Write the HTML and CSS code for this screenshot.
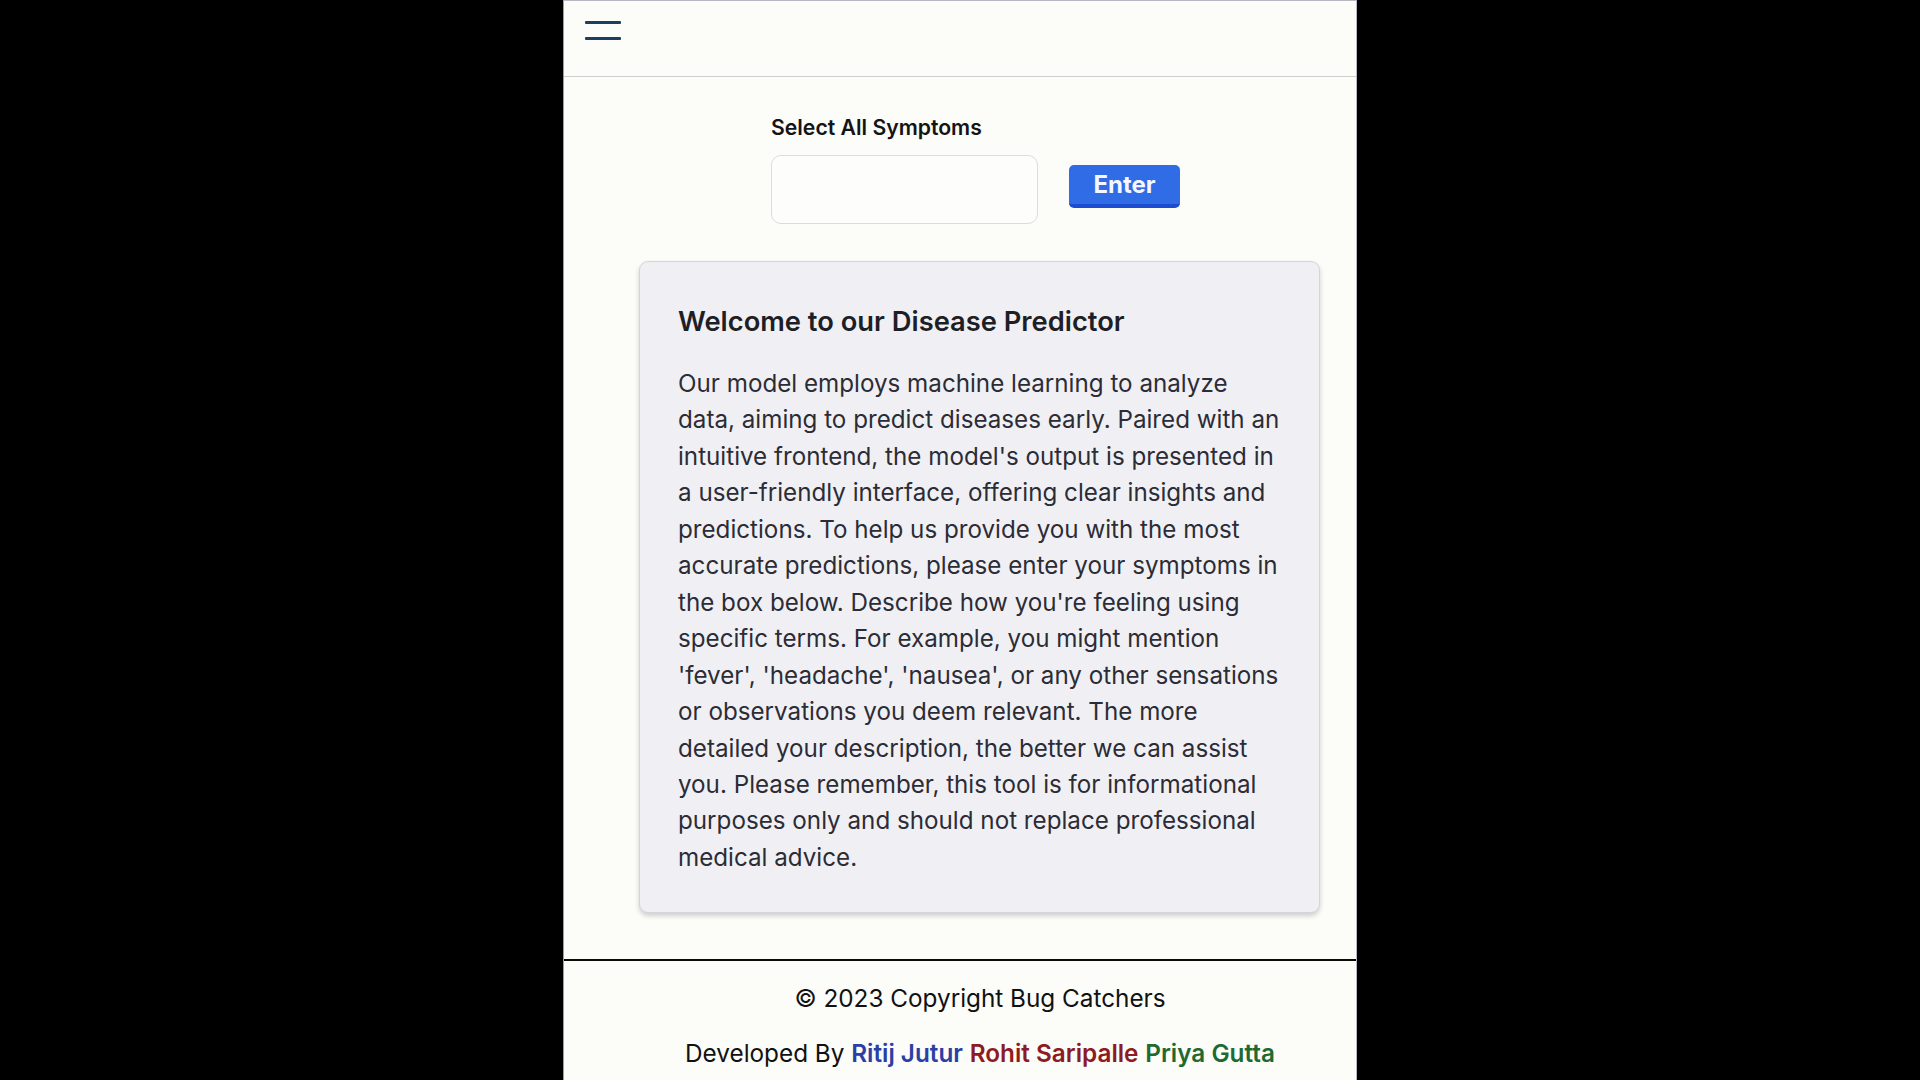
FILE: index.html
```html
<!DOCTYPE html>
<html lang="en">
<head>
<meta charset="utf-8">
<title>Disease Predictor</title>
<link rel="stylesheet" href="styles.css">
</head>
<body>
<div class="app">
  <header class="topbar">
    <button class="menu-btn" aria-label="Menu">
      <span class="bar"></span>
      <span class="bar"></span>
    </button>
  </header>
  <main class="main">
    <div class="symptom-row">
      <div class="field">
        <label class="field-label" for="symptoms">Select All Symptoms</label>
        <div class="field-input" id="symptoms"></div>
      </div>
      <button class="enter-btn">Enter</button>
    </div>
    <section class="card">
      <h2 class="card-title">Welcome to our Disease Predictor</h2>
      <p class="card-text">Our model employs machine learning to analyze data, aiming to predict diseases early. Paired with an intuitive frontend, the model's output is presented in a user-friendly interface, offering clear insights and predictions. To help us provide you with the most accurate predictions, please enter your symptoms in the box below. Describe how you're feeling using specific terms. For example, you might mention 'fever', 'headache', 'nausea', or any other sensations or observations you deem relevant. The more detailed your description, the better we can assist you. Please remember, this tool is for informational purposes only and should not replace professional medical advice.</p>
    </section>
  </main>
  <footer class="footer">
    <p class="footer-line">© 2023 Copyright Bug Catchers</p>
    <p class="footer-line">Developed By <span class="dev dev-blue">Ritij Jutur</span> <span class="dev dev-red">Rohit Saripalle</span> <span class="dev dev-green">Priya Gutta</span></p>
  </footer>
</div>
</body>
</html>
```

FILE: styles.css
```css
html, body {
  margin: 0;
  padding: 0;
  background: #000;
  height: 100%;
}
body {
  font-family: Inter, "Noto Sans", "Liberation Sans", sans-serif;
  overflow: hidden;
}
.app {
  width: 792px;
  margin: 0 auto;
  min-height: 100vh;
  background: #fcfcf9;
  border-left: 1px solid #9a9aa8;
  border-right: 1px solid #b8b8c4;
  border-top: 1px solid #b8b8c4;
  box-sizing: content-box;
  display: flex;
  flex-direction: column;
}
.topbar {
  height: 75px;
  border-bottom: 1px solid #cfcfcf;
  display: flex;
  align-items: flex-start;
  padding-left: 21px;
}
.menu-btn {
  margin-top: 20px;
  padding: 0;
  border: 0;
  background: transparent;
  width: 36px;
  display: flex;
  flex-direction: column;
  gap: 13px;
  cursor: pointer;
}
.bar {
  display: block;
  width: 36px;
  height: 3px;
  background: #1f3c63;
  border-radius: 1px;
}
.main {
  display: flex;
  flex-direction: column;
}
.symptom-row {
  display: flex;
  align-items: center;
  padding-left: 207px;
  margin-top: 37px;
  gap: 31px;
}
.field {
  display: flex;
  flex-direction: column;
}
.field-label {
  font-size: 21.2px;
  font-weight: 600;
  line-height: 26px;
  color: #141414;
  margin-bottom: 15px;
}
.field-input {
  width: 265px;
  height: 67px;
  border: 1px solid #dcdcdc;
  border-radius: 10px;
  background: #fdfdfb;
}
.enter-btn {
  margin-top: 34px;
  width: 111px;
  height: 43px;
  border: 0;
  border-bottom: 4px solid #1c4ccf;
  border-radius: 5px;
  background: #2f6ce5;
  color: #f4f7ff;
  font-family: Inter, "Noto Sans", sans-serif;
  font-size: 24px;
  font-weight: 700;
  padding: 0;
  cursor: pointer;
}
.card {
  margin: 37px 0 0 75px;
  width: 609px;
  padding: 42px 32px 36px 38px;
  background: #f0f0f4;
  border: 1px solid #d4d4de;
  border-radius: 9px;
  box-shadow: 0 3px 5px rgba(0, 0, 0, 0.18);
}
.card-title {
  margin: 0 0 26px 0;
  font-size: 27.3px;
  line-height: 36px;
  font-weight: 600;
  color: #1e1e26;
}
.card-text {
  margin: 0;
  font-size: 24.2px;
  line-height: 36.45px;
  color: #2c2c36;
}
.footer {
  margin-top: 46px;
  border-top: 2px solid #0a0a0a;
  padding: 22px 0 0 40px;
  text-align: center;
  color: #111;
}
.footer-line {
  margin: 0 0 25px 0;
  font-size: 24.3px;
  line-height: 30px;
}
.dev {
  font-weight: 600;
}
.dev-blue { color: #2b3fa6; }
.dev-red { color: #8e1b22; }
.dev-green { color: #1f6a30; }
```
